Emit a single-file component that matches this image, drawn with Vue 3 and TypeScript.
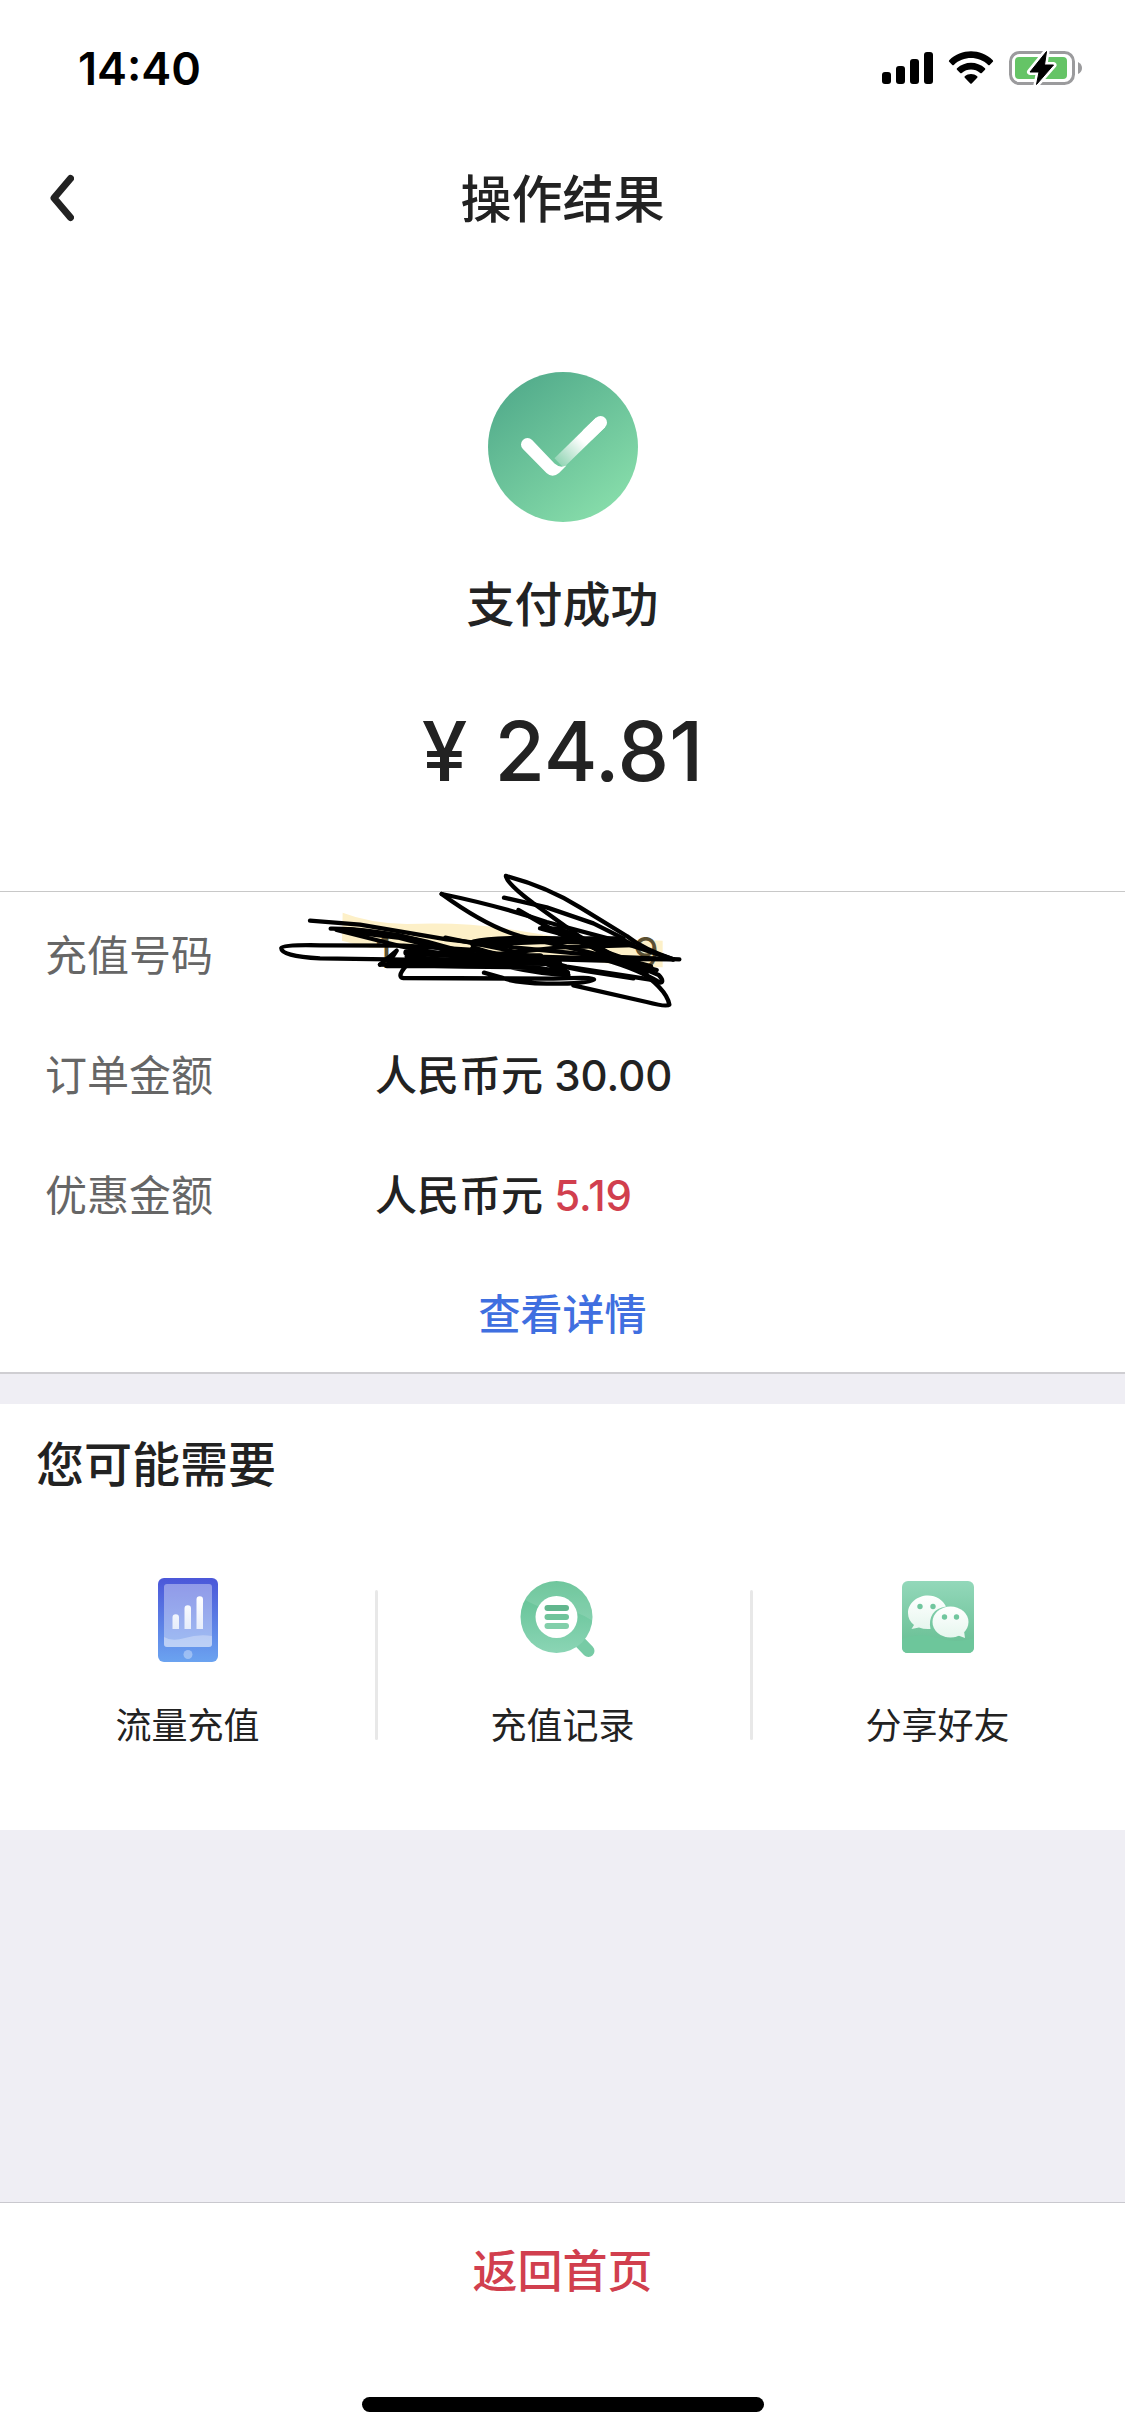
<script setup lang="ts">
interface OrderRow {
  label: string
  unit: string
  value: string
  highlight: boolean
}

interface Shortcut {
  id: 'data' | 'records' | 'share'
  label: string
}

const orderRows: OrderRow[] = [
  { label: '订单金额', unit: '人民币元', value: '30.00', highlight: false },
  { label: '优惠金额', unit: '人民币元', value: '5.19', highlight: true },
]

const shortcuts: Shortcut[] = [
  { id: 'data', label: '流量充值' },
  { id: 'records', label: '充值记录' },
  { id: 'share', label: '分享好友' },
]
</script>

<template>
  <div class="page">
    <div class="status-bar">
      <span class="time">14:40</span>
      <div class="status-icons">
        <svg class="signal" viewBox="0 0 51 34" aria-hidden="true">
          <rect x="0" y="21" width="9" height="12" rx="3" />
          <rect x="14" y="15" width="9" height="18" rx="3" />
          <rect x="28" y="8" width="9" height="25" rx="3" />
          <rect x="42" y="1" width="9" height="32" rx="3" />
        </svg>
        <svg class="wifi" viewBox="0 0 46 34" aria-hidden="true">
          <path d="M1.2 9.2C13.500-2.700 32.500-2.700 44.800 9.200Q45.500 10 44.800 10.800L41.700 13.900Q41 14.500 40.200 13.900C30.500 4.800 15.500 4.800 5.800 13.900Q5 14.500 4.300 13.900L1.200 10.800Q.5 10 1.200 9.200Z" />
          <path d="M9 17.200C17 9.800 29 9.800 37 17.200Q37.700 18 37 18.800L33.800 22Q33 22.600 32.200 22C27 17.400 19 17.400 13.800 22Q13 22.600 12.200 22L9 18.800Q8.300 18 9 17.200Z" />
          <path d="M16.800 25.200C20.400 22.200 25.600 22.200 29.200 25.200Q30 26 29.200 26.800L23.700 32.400Q23 33 22.300 32.400L16.800 26.800Q16 26 16.800 25.200Z" />
        </svg>
        <svg class="battery" viewBox="0 0 74 36" aria-hidden="true">
          <rect x="1.500" y="2.500" width="63" height="31" rx="9" fill="none" stroke="#9b9b9d" stroke-width="3" />
          <path d="M69 12Q73 14 73 18T69 24Z" fill="#9b9b9d" />
          <rect x="6" y="7" width="52" height="22" rx="4" fill="#65c466" />
          <path d="M37.500 1.500L21 22H30L27.500 34.500L44.500 15H35.500Z" fill="#000" stroke="#fff" stroke-width="6" stroke-linejoin="round" />
          <path d="M37.500 1.500L21 22H30L27.500 34.500L44.500 15H35.500Z" fill="#000" stroke="#000" stroke-width="1" stroke-linejoin="round" />
        </svg>
      </div>
    </div>

    <header class="nav-bar">
      <button class="back" type="button" aria-label="返回">
        <svg viewBox="0 0 26 48" aria-hidden="true">
          <path d="M22.500 4.500L6 24L22.500 43.500" fill="none" stroke="#222" stroke-width="7" stroke-linejoin="round" stroke-linecap="round" />
        </svg>
      </button>
      <h1>操作结果</h1>
    </header>

    <section class="result">
      <svg class="result-icon" viewBox="0 0 150 150" aria-hidden="true">
        <defs>
          <linearGradient id="disc" x1="0.200" y1="0.100" x2="0.800" y2="0.900">
            <stop offset="0" stop-color="#55ae8d" />
            <stop offset="1" stop-color="#85dba9" />
          </linearGradient>
          <linearGradient id="tick" gradientUnits="userSpaceOnUse" x1="72" y1="92" x2="94" y2="68">
            <stop offset="0" stop-color="#fff" stop-opacity="0.250" />
            <stop offset="1" stop-color="#fff" />
          </linearGradient>
        </defs>
        <circle cx="75" cy="75" r="75" fill="url(#disc)" />
        <path d="M71 91L112.500 50.500" fill="none" stroke="url(#tick)" stroke-width="13" />
        <path d="M100 62.500L112.500 50.500" fill="none" stroke="#fff" stroke-width="13" stroke-linecap="round" />
        <path d="M34.900 77.100L58.500 101Q64.500 106.500 71 101L78.500 93.500Q72 96.500 66.500 91.500L44.100 67.900A6.500 6.500 0 0 0 34.900 77.100Z" fill="#fff" />
      </svg>
      <p class="result-text">支付成功</p>
      <p class="amount"><span>¥</span><span>24.81</span></p>
    </section>

    <section class="order">
      <dl>
        <div class="order-row">
          <dt>充值号码</dt>
          <svg class="scribble" viewBox="0 0 1320 480" aria-hidden="true">
            <path class="marker" d="M248 158Q330 190 440 192Q600 185 740 206L900 232L1208 242V322Q1100 322 900 290L520 262L330 264L246 242Z" />
          </svg>
          <dd class="masked"><span>1</span><span>9</span></dd>
          <svg class="scribble" viewBox="0 0 1320 480" aria-hidden="true">
            <g class="ink">
              <path d="M150 182L300 194L560 238L760 262L1050 290L1258 298" />
              <path d="M212 206Q330 205 500 245L700 300" />
              <path d="M230 210L420 258L640 300L920 340" />
              <path d="M1240 298L900 296L440 299L180 295Q62 288 64 264Q70 254 180 256L430 257L640 270L900 310" />
              <path d="M360 314L410 272L380 318L700 318L900 300" />
              <path d="M360 314L620 320L820 322Q930 335 925 346Q820 340 700 310" />
              <path d="M436 320Q410 352 430 354L880 356Q1000 350 1002 358Q980 372 860 371Q760 368 722 352L672 338" />
              <path d="M545 102Q680 200 780 228L1000 280L1190 330" />
              <path d="M545 102Q720 138 860 186L1080 245L1240 298" />
              <path d="M738 48Q740 70 820 130L960 230L1120 320Q1220 385 1228 434Q1220 442 1160 426L940 376" />
              <path d="M738 48Q860 80 960 142L1100 228Q1150 268 1240 298" />
              <path d="M732 113L860 142L1000 190L1090 235" />
              <path d="M775 150L900 222L1090 300L1196 345Q1215 365 1200 368Q1120 320 1000 290" />
              <path d="M840 205L900 206L960 235L1040 290L1160 340" />
              <path d="M1180 360L920 320L740 270L556 233" />
              <path d="M640 245Q700 230 900 235L1080 235L1120 255L900 262L640 290" />
              <path d="M1120 355L970 332L840 306L560 300L440 290" />
            </g>
            <g class="ink dense">
              <path d="M400 308L600 306L860 308L920 338" />
              <path d="M270 212L420 230L540 262L640 295" />
              <path d="M440 278L640 286L850 294L1090 300L1170 322" />
              <path d="M640 250L860 242L1090 244" />
              <path d="M640 266L720 290L840 290" />
              <path d="M850 204L940 228L1040 280L1110 305" />
            </g>
          </svg>
        </div>
        <div v-for="row in orderRows" :key="row.label" class="order-row">
          <dt>{{ row.label }}</dt>
          <dd>{{ row.unit }} <span :class="{ discount: row.highlight }">{{ row.value }}</span></dd>
        </div>
      </dl>
      <a class="details" href="#">查看详情</a>
    </section>

    <section class="suggestions">
      <h2>您可能需要</h2>
      <ul>
        <li v-for="item in shortcuts" :key="item.id">
          <button class="shortcut" type="button">
            <svg v-if="item.id === 'data'" viewBox="0 0 90 90" aria-hidden="true">
              <defs>
                <linearGradient id="phone" x1="0" y1="0" x2="0" y2="1">
                  <stop offset="0" stop-color="#4b57d9" />
                  <stop offset="1" stop-color="#6ba3f0" />
                </linearGradient>
                <linearGradient id="bars" x1="0" y1="0" x2="0" y2="1">
                  <stop offset="0" stop-color="#fff" />
                  <stop offset="1" stop-color="#e6edfb" />
                </linearGradient>
              </defs>
              <rect x="15" y="3" width="60" height="84" rx="6" fill="url(#phone)" />
              <rect x="21" y="9" width="48" height="63" rx="3" fill="#fff" fill-opacity="0.380" />
              <path d="M21 62Q29 67 42 63T69 61V69Q69 72 66 72H24Q21 72 21 69Z" fill="#fff" fill-opacity="0.300" />
              <path d="M29.500 54V42.500a3.250 3.250 0 0 1 6.500 0V54ZM41.500 54V33.500a3.250 3.250 0 0 1 6.500 0V54ZM53.500 54V24.500a3.250 3.250 0 0 1 6.500 0V54Z" fill="url(#bars)" />
              <circle cx="45" cy="79.500" r="4.500" fill="#fff" fill-opacity="0.350" />
            </svg>
            <svg v-else-if="item.id === 'records'" viewBox="0 0 90 90" aria-hidden="true">
              <defs>
                <linearGradient id="lens" x1="0.500" y1="0" x2="0.500" y2="1">
                  <stop offset="0" stop-color="#5cbf90" />
                  <stop offset="1" stop-color="#8bd5b5" />
                </linearGradient>
                <clipPath id="lens-clip"><circle cx="38.500" cy="42" r="36" /></clipPath>
              </defs>
              <path d="M58 63L70.500 76" fill="none" stroke="#77cba5" stroke-width="12" stroke-linecap="round" />
              <circle cx="38.500" cy="42" r="36" fill="url(#lens)" />
              <path d="M0 20Q20 35 38 34T78 48V0H0Z" clip-path="url(#lens-clip)" fill="#fff" fill-opacity="0.120" />
              <circle cx="38.500" cy="42" r="21" fill="#fff" />
              <path d="M29.500 33H48" stroke="#62b78e" stroke-width="6" stroke-linecap="round" />
              <path d="M29.500 42H48" stroke="#70c49b" stroke-width="6" stroke-linecap="round" />
              <path d="M29.500 51H48" stroke="#82cfaa" stroke-width="6" stroke-linecap="round" />
            </svg>
            <svg v-else viewBox="0 0 90 90" aria-hidden="true">
              <defs>
                <linearGradient id="tile" x1="0" y1="0" x2="0" y2="1">
                  <stop offset="0" stop-color="#93d8ba" />
                  <stop offset="1" stop-color="#65bd91" />
                </linearGradient>
                <linearGradient id="bubble" x1="0" y1="0" x2="0" y2="1">
                  <stop offset="0" stop-color="#fff" />
                  <stop offset="1" stop-color="#e6f6ee" />
                </linearGradient>
              </defs>
              <rect x="9" y="6" width="72" height="72" rx="6" fill="url(#tile)" />
              <path d="M9 64Q27 57 45 63T81 63V72Q81 78 75 78H15Q9 78 9 72Z" fill="#6dc69b" />
              <path d="M35 20.500C24 20.500 15 28.500 15 38C15 43 17 47 21 50L18.500 54L26 52.500Q31 54.500 37.500 54C35 42 41 33 53 31.500C50 25 43 20.500 35 20.500Z" fill="url(#bubble)" />
              <ellipse cx="57.500" cy="47" rx="18" ry="15.500" fill="url(#bubble)" />
              <path d="M64 60L72 63L71 56Z" fill="#e9f7f0" />
              <g fill="#71c69e">
                <circle cx="27" cy="31.500" r="2.700" />
                <circle cx="40" cy="31.500" r="2.700" />
                <circle cx="51.500" cy="42" r="2.700" />
                <circle cx="63.500" cy="42" r="2.700" />
              </g>
            </svg>
            <span>{{ item.label }}</span>
          </button>
        </li>
      </ul>
    </section>

    <footer class="footer">
      <button class="home" type="button">返回首页</button>
      <div class="home-indicator"></div>
    </footer>
  </div>
</template>

<style>
body {
  margin: 0;
  background: #efeef4;
}
</style>

<style scoped>
.page {
  display: flex;
  flex-direction: column;
  min-height: 100vh;
  color: #222;
  background: #efeef4;
  font-family: Inter, "Noto Sans CJK SC", sans-serif;
  font-size: 42px;
}

h1,
h2,
p,
dl,
dd,
ul {
  margin: 0;
  padding: 0;
}

h1,
h2,
p,
dd {
  font-weight: 500;
}

button {
  padding: 0;
  border: 0;
  background: none;
  color: inherit;
  font: inherit;
  cursor: pointer;
}

svg {
  display: block;
}

.status-bar {
  display: flex;
  align-items: center;
  justify-content: space-between;
  height: 132px;
  padding: 4px 42px 0 78px;
  box-sizing: border-box;
  background: #fff;
}

.time {
  color: #000;
  font-size: 45px;
  font-weight: 600;
}

.status-icons {
  display: flex;
  align-items: center;
  gap: 15px;
}

.signal {
  width: 51px;
  height: 34px;
}

.wifi {
  width: 46px;
  height: 34px;
}

.battery {
  width: 74px;
  height: 36px;
}

.nav-bar {
  display: grid;
  grid-template-columns: 120px 1fr 120px;
  align-items: center;
  height: 132px;
  background: #fff;
}

.back {
  display: flex;
  align-items: center;
  height: 132px;
  padding-left: 48px;
}

.back svg {
  width: 26px;
  height: 48px;
}

h1 {
  padding-top: 3px;
  font-size: 51px;
  line-height: 72px;
  text-align: center;
}

.result {
  display: flex;
  flex-direction: column;
  align-items: center;
  padding: 108px 0 79px;
  border-bottom: 1px solid #c8c8c8;
  background: #fff;
}

.result-icon {
  width: 150px;
  height: 150px;
}

.result-text {
  margin-top: 47px;
  font-size: 48px;
  line-height: 72px;
}

.amount {
  display: flex;
  gap: 27px;
  margin-top: 51px;
  font-size: 82px;
  line-height: 120px;
}

.order {
  border-bottom: 2px solid #cfced2;
  background: #fff;
}

.order-row {
  position: relative;
  display: flex;
  align-items: center;
  height: 120px;
  padding-left: 45px;
}

dt {
  width: 330px;
  color: #666;
}

dd {
  white-space: nowrap;
}

.masked {
  position: relative;
  display: flex;
  justify-content: space-between;
  width: 284px;
  color: #5c5031;
  font-weight: 400;
}

.scribble {
  position: absolute;
  top: -32px;
  left: 260px;
  width: 440px;
  height: 160px;
}

.marker {
  fill: #fdf0c8;
}

.ink {
  fill: none;
  stroke: #000;
  stroke-width: 13px;
  stroke-linecap: round;
  stroke-linejoin: round;
}

.dense {
  stroke-width: 20px;
}

.discount {
  color: #d13f4e;
}

.details {
  display: block;
  padding-top: 6px;
  color: #3f6fe0;
  font-weight: 500;
  line-height: 114px;
  text-align: center;
  text-decoration: none;
}

.suggestions {
  margin-top: 30px;
  background: #fff;
}

h2 {
  padding: 2px 0 0 36px;
  font-size: 48px;
  line-height: 118px;
}

ul {
  display: flex;
  list-style: none;
}

li {
  position: relative;
  flex: 1;
}

li + li::before {
  content: "";
  position: absolute;
  top: 66px;
  left: 0;
  width: 3px;
  height: 150px;
  border-radius: 2px;
  background: #e8e8e8;
}

.shortcut {
  display: flex;
  flex-direction: column;
  align-items: center;
  gap: 34px;
  width: 100%;
  padding: 51px 0 77px;
  font-size: 36px;
  line-height: 54px;
}

.shortcut svg {
  width: 90px;
  height: 90px;
}

.footer {
  display: flex;
  flex-direction: column;
  align-items: center;
  margin-top: auto;
  padding-bottom: 24px;
  border-top: 1px solid #c9c8ce;
  background: #fff;
}

.home {
  width: 100%;
  height: 130px;
  color: #d13f4e;
  font-size: 45px;
  font-weight: 500;
}

.home-indicator {
  width: 402px;
  height: 15px;
  margin-top: 64px;
  border-radius: 8px;
  background: #000;
}
</style>
